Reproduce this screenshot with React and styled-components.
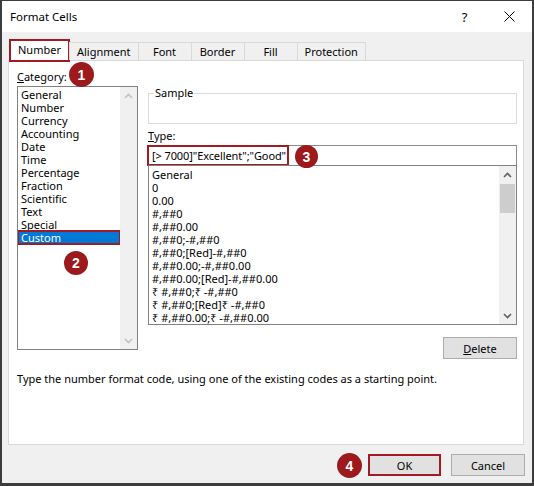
import React from 'react';
import styled, { createGlobalStyle } from 'styled-components';

const RED = '#a11c22';

const GlobalStyle = createGlobalStyle`
  html, body { margin: 0; padding: 0; background: #3c3c3c; }
  body {
    font-family: "Noto Sans", "Open Sans", "DejaVu Sans", sans-serif;
    font-size: 11px;
    color: #000;
  }
  * { box-sizing: border-box; }
`;

const Window = styled.div`
  width: 534px;
  height: 486px;
  border-style: solid;
  border-color: #3c3c3c;
  border-width: 1px 2px 3px 2px;
  background: #f0f0f0;
  display: flex;
  flex-direction: column;
`;

const TitleBar = styled.div`
  height: 31px;
  background: #fff;
  display: flex;
  align-items: center;
  padding-left: 8px;
`;

const Title = styled.div`
  flex: 1;
  font-size: 11.5px;
`;

const CaptionButton = styled.div`
  width: 45px;
  height: 31px;
  display: flex;
  align-items: center;
  justify-content: center;
  font-size: 13px;
`;

const Body = styled.div`
  flex: 1;
  display: flex;
  flex-direction: column;
  padding: 7px 8px 0 6px;
`;

const TabStrip = styled.div`
  display: flex;
  align-items: flex-end;
  height: 21px;
  padding-left: 1px;
  position: relative;
  z-index: 1;
`;

const Tab = styled.div`
  height: ${p => (p.$active ? 23 : 18)}px;
  min-width: 54px;
  padding: 0 ${p => (p.$active ? 7 : 7)}px;
  margin-bottom: ${p => (p.$active ? -2 : 0)}px;
  margin-left: ${p => (p.$first ? 0 : -1)}px;
  background: ${p => (p.$active ? '#fff' : '#f0f0f0')};
  border: ${p => (p.$active ? `2px solid ${RED}` : '1px solid #d9d9d9')};
  border-bottom: ${p => (p.$active ? `2px solid ${RED}` : 'none')};
  line-height: ${p => (p.$active ? 18 : 17)}px;
  text-align: center;
  white-space: nowrap;
`;

const Panel = styled.div`
  height: 385px;
  background: #fff;
  border: 1px solid #d9d9d9;
  padding: 8px 6px 0 8px;
  display: flex;
  flex-direction: column;
`;

const TopRow = styled.div`
  display: flex;
  align-items: flex-start;
  gap: 10px;
`;

const LeftCol = styled.div`
  width: 121px;
  flex: none;
  display: flex;
  flex-direction: column;
`;

const FieldLabel = styled.div`
  position: relative;
  line-height: ${p => p.$lh || 16}px;
  margin-top: ${p => p.$mt || 0}px;
  margin-bottom: ${p => p.$mb || 0}px;
`;

const ListBox = styled.div`
  position: relative;
  height: ${p => p.$h}px;
  border: 1px solid #828282;
  background: #fff;
  display: flex;
`;

const Items = styled.div`
  flex: 1;
  padding-top: ${p => p.$pt}px;
  overflow: hidden;
`;

const Item = styled.div`
  height: 13px;
  line-height: 13px;
  padding-left: 3px;
  white-space: nowrap;
  background: ${p => (p.$selected ? '#0078d7' : 'transparent')};
  color: ${p => (p.$selected ? '#fff' : '#000')};
  outline: ${p => (p.$selected ? `2px solid ${RED}` : 'none')};
  outline-offset: -1px;
  position: relative;
`;

const ScrollBar = styled.div`
  width: 17px;
  flex: none;
  background: #f0f0f0;
  display: flex;
  flex-direction: column;
`;

const ScrollArrow = styled.div`
  height: 17px;
  display: flex;
  align-items: center;
  justify-content: center;
`;

const ScrollTrack = styled.div`
  flex: 1;
  padding: 1px 1px 0 1px;
`;

const Thumb = styled.div`
  height: 29px;
  background: #cdcdcd;
`;

const RightCol = styled.div`
  flex: 1;
  margin-top: 17px;
  display: flex;
  flex-direction: column;
`;

const SampleBox = styled.fieldset`
  margin: 0;
  padding: 0 5px;
  border: 1px solid #dcdcdc;
  min-width: 0;
`;

const Legend = styled.legend`
  padding: 0 1px;
  line-height: 14px;
`;

const SampleValue = styled.div`
  height: 23px;
`;

const TypeField = styled.div`
  position: relative;
  height: 20px;
  border: 1px solid #8c8c8c;
  border-bottom: none;
  padding-left: 3px;
  line-height: 19px;
  letter-spacing: -0.1px;
  white-space: nowrap;
`;

const Mark = styled.div`
  position: absolute;
  left: -2px;
  top: -1px;
  width: 142px;
  height: 21px;
  border: 2px solid ${RED};
  pointer-events: none;
`;

const Button = styled.div`
  position: relative;
  width: ${p => p.$w}px;
  height: 22px;
  background: #e1e1e1;
  border: ${p => (p.$marked ? `2px solid ${RED}` : '1px solid #adadad')};
  display: flex;
  align-items: center;
  justify-content: center;
`;

const DeleteRow = styled.div`
  display: flex;
  justify-content: flex-end;
  margin-top: 12px;
`;

const Description = styled.div`
  margin-top: 13px;
  line-height: 14px;
`;

const Footer = styled.div`
  display: flex;
  justify-content: flex-end;
  gap: 10px;
  margin-top: 9px;
  margin-right: -1px;
`;

const Badge = styled.span`
  position: absolute;
  left: ${p => p.$x}px;
  top: ${p => p.$y}px;
  width: ${p => p.$size}px;
  height: ${p => p.$size}px;
  border-radius: 50%;
  background: #9c1a1c;
  color: #fff;
  font: bold 14px "Liberation Sans", Arial, sans-serif;
  letter-spacing: 0;
  display: flex;
  align-items: center;
  justify-content: center;
  z-index: 3;
`;

function Chevron({ up, color }) {
  return (
    <svg width="9" height="6" viewBox="0 0 9 6">
      <polyline
        points={up ? '1,5 4.5,1.5 8,5' : '1,1 4.5,4.5 8,1'}
        fill="none"
        stroke={color}
        strokeWidth="1.6"
      />
    </svg>
  );
}

const tabs = ['Number', 'Alignment', 'Font', 'Border', 'Fill', 'Protection'];

const categories = [
  'General', 'Number', 'Currency', 'Accounting', 'Date', 'Time',
  'Percentage', 'Fraction', 'Scientific', 'Text', 'Special', 'Custom',
];

const formats = [
  'General',
  '0',
  '0.00',
  '#,##0',
  '#,##0.00',
  '#,##0;-#,##0',
  '#,##0;[Red]-#,##0',
  '#,##0.00;-#,##0.00',
  '#,##0.00;[Red]-#,##0.00',
  '₹ #,##0;₹ -#,##0',
  '₹ #,##0;[Red]₹ -#,##0',
  '₹ #,##0.00;₹ -#,##0.00',
];

export default function App() {
  return (
    <>
      <GlobalStyle />
      <Window>
        <TitleBar>
          <Title>Format Cells</Title>
          <CaptionButton>?</CaptionButton>
          <CaptionButton>
            <svg width="11" height="11" viewBox="0 0 11 11">
              <path d="M0.5 0.5 L10.5 10.5 M10.5 0.5 L0.5 10.5" stroke="#000" strokeWidth="1" />
            </svg>
          </CaptionButton>
        </TitleBar>

        <Body>
          <TabStrip>
            {tabs.map((t, i) => (
              <Tab key={t} $active={i === 0} $first={i === 0}>{t}</Tab>
            ))}
          </TabStrip>

          <Panel>
            <TopRow>
              <LeftCol>
                <FieldLabel $mb={1}>
                  <u>C</u>ategory:
                  <Badge $x={52} $y={-7} $size={25}>1</Badge>
                </FieldLabel>
                <ListBox $h={264}>
                  <Items $pt={1}>
                    {categories.map(c => (
                      <Item key={c} $selected={c === 'Custom'}>{c}</Item>
                    ))}
                  </Items>
                  <ScrollBar>
                    <ScrollArrow><Chevron up color="#c2c2c2" /></ScrollArrow>
                    <ScrollTrack />
                    <ScrollArrow><Chevron color="#c2c2c2" /></ScrollArrow>
                  </ScrollBar>
                  <Badge $x={46} $y={164} $size={24}>2</Badge>
                </ListBox>
              </LeftCol>

              <RightCol>
                <SampleBox>
                  <Legend>Sample</Legend>
                  <SampleValue />
                </SampleBox>

                <FieldLabel $lh={14} $mt={5} $mb={2}>
                  <u>T</u>ype:
                </FieldLabel>
                <TypeField>
                  {'[> 7000]"Excellent";"Good"'}
                  <Mark />
                  <Badge $x={146} $y={-1} $size={23}>3</Badge>
                </TypeField>
                <ListBox $h={160}>
                  <Items $pt={1.5}>
                    {formats.map(f => (
                      <Item key={f}>{f}</Item>
                    ))}
                  </Items>
                  <ScrollBar>
                    <ScrollArrow><Chevron up color="#606060" /></ScrollArrow>
                    <ScrollTrack><Thumb /></ScrollTrack>
                    <ScrollArrow><Chevron color="#606060" /></ScrollArrow>
                  </ScrollBar>
                </ListBox>

                <DeleteRow>
                  <Button $w={74}><span><u>D</u>elete</span></Button>
                </DeleteRow>
              </RightCol>
            </TopRow>

            <Description>
              Type the number format code, using one of the existing codes as a starting point.
            </Description>
          </Panel>

          <Footer>
            <Button $w={73} $marked>
              OK
              <Badge $x={-33} $y={-3} $size={25}>4</Badge>
            </Button>
            <Button $w={74}>Cancel</Button>
          </Footer>
        </Body>
      </Window>
    </>
  );
}
